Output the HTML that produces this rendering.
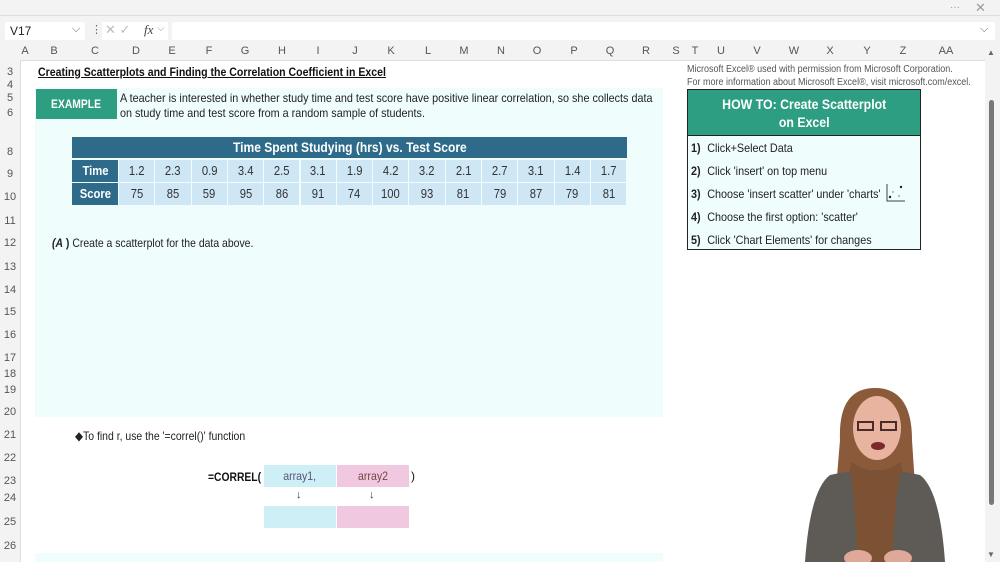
<!DOCTYPE html>
<html><head><meta charset="utf-8"><style>
*{margin:0;padding:0;box-sizing:border-box}
body{width:1000px;height:562px;overflow:hidden;background:#f3f3f3;font-family:"Liberation Sans",Arial,sans-serif;position:relative;color:#222}
.a{position:absolute}
.col{position:absolute;top:45px;font-size:11px;color:#555;transform:translateX(-50%)}
.row{position:absolute;left:0;width:20px;text-align:center;font-size:11px;color:#555;transform:translateY(-50%)}
.n{white-space:nowrap;transform-origin:left top;transform:scaleX(.86)}
.c{position:absolute;height:22px;line-height:22px;text-align:center;font-size:12.5px;color:#333;background:#cfe6f5}
.h{background:#2e6b8a;color:#fff;font-weight:bold}
.c span{display:inline-block;transform:scaleX(.9)}
.step{position:absolute;left:691px;font-size:12px;color:#222;white-space:nowrap;transform-origin:left top;transform:scaleX(.9)}
.step b{margin-right:4px}
</style></head><body>
<div class="a" style="left:0;top:0;width:1000px;height:16px;background:#f3f3f3;border-bottom:1px solid #ddd"></div>
<div class="a" style="left:950px;top:2px;font-size:10px;color:#999">···</div>
<div class="a" style="left:975px;top:0px;font-size:13px;color:#999">✕</div>
<div class="a" style="left:5px;top:22px;width:80px;height:18px;background:#fff;border-radius:2px"></div>
<div class="a" style="left:10px;top:24px;font-size:12px;color:#222">V17</div>
<div class="a" style="left:72px;top:23px;font-size:11px;color:#666">⌵</div>
<div class="a" style="left:91px;top:23px;font-size:11px;color:#666">⋮</div>
<div class="a" style="left:102px;top:22px;width:66px;height:18px;background:#fff"></div>
<div class="a" style="left:105px;top:22px;font-size:13px;color:#bbb">✕ ✓</div>
<div class="a" style="left:144px;top:22px;font-size:13px;color:#444;font-style:italic;font-family:'Liberation Serif',serif">fx</div>
<div class="a" style="left:157px;top:23px;font-size:10px;color:#999">⌵</div>
<div class="a" style="left:172px;top:22px;width:823px;height:18px;background:#fff;border-radius:2px"></div>
<div class="a" style="left:980px;top:23px;font-size:11px;color:#666">⌵</div>
<div class="col" style="left:25px">A</div><div class="col" style="left:54px">B</div><div class="col" style="left:95px">C</div><div class="col" style="left:136px">D</div><div class="col" style="left:172px">E</div><div class="col" style="left:209px">F</div><div class="col" style="left:245px">G</div><div class="col" style="left:282px">H</div><div class="col" style="left:318px">I</div><div class="col" style="left:355px">J</div><div class="col" style="left:391px">K</div><div class="col" style="left:428px">L</div><div class="col" style="left:464px">M</div><div class="col" style="left:501px">N</div><div class="col" style="left:537px">O</div><div class="col" style="left:574px">P</div><div class="col" style="left:610px">Q</div><div class="col" style="left:646px">R</div><div class="col" style="left:676px">S</div><div class="col" style="left:695px">T</div><div class="col" style="left:721px">U</div><div class="col" style="left:757px">V</div><div class="col" style="left:794px">W</div><div class="col" style="left:830px">X</div><div class="col" style="left:867px">Y</div><div class="col" style="left:903px">Z</div><div class="col" style="left:946px">AA</div>
<div class="a" style="left:20px;top:60px;width:965px;height:502px;background:#fff;border-left:1px solid #ddd;border-top:1px solid #ddd"></div>
<div class="a" style="left:987px;top:48px;font-size:8px;color:#666">▲</div>
<div class="a" style="left:989px;top:100px;width:5px;height:405px;background:#777;border-radius:3px"></div>
<div class="a" style="left:987px;top:550px;font-size:8px;color:#666">▼</div>
<div class="row" style="top:72px">3</div><div class="row" style="top:85px">4</div><div class="row" style="top:98px">5</div><div class="row" style="top:113px">6</div><div class="row" style="top:152px">8</div><div class="row" style="top:174px">9</div><div class="row" style="top:197px">10</div><div class="row" style="top:221px">11</div><div class="row" style="top:243px">12</div><div class="row" style="top:267px">13</div><div class="row" style="top:290px">14</div><div class="row" style="top:312px">15</div><div class="row" style="top:335px">16</div><div class="row" style="top:358px">17</div><div class="row" style="top:374px">18</div><div class="row" style="top:390px">19</div><div class="row" style="top:412px">20</div><div class="row" style="top:435px">21</div><div class="row" style="top:458px">22</div><div class="row" style="top:481px">23</div><div class="row" style="top:498px">24</div><div class="row" style="top:522px">25</div><div class="row" style="top:546px">26</div>
<div class="a" style="left:38px;top:65px;font-size:12px;font-weight:bold;text-decoration:underline;color:#111;white-space:nowrap;transform-origin:left top;transform:scaleX(.88)">Creating Scatterplots and Finding the Correlation Coefficient in Excel</div>
<div class="a" style="left:35px;top:88px;width:628px;height:329px;background:#effdfd"></div>
<div class="a" style="left:35px;top:553px;width:628px;height:9px;background:#effdfd"></div>
<div class="a" style="left:36px;top:89px;width:81px;height:30px;background:#2e9e82;color:#fff;font-weight:bold;font-size:12px;line-height:30px;text-align:center"><span style="display:inline-block;transform:scaleX(.86)">EXAMPLE</span></div>
<div class="a" style="left:120px;top:91px;font-size:12px;line-height:15px;color:#222;white-space:nowrap;transform-origin:left top;transform:scaleX(.9)">A teacher is interested in whether study time and test score have positive linear correlation, so she collects data<br>on study time and test score from a random sample of students.</div>
<div class="a h" style="left:72px;top:137px;width:555px;height:21px;line-height:21px;text-align:center;font-size:14px"><span style="display:inline-block;transform:scaleX(.86)">Time Spent Studying (hrs) vs. Test Score</span></div>
<div class="c h" style="left:72px;top:160px;width:46px"><span>Time</span></div>
<div class="c h" style="left:72px;top:183px;width:46px"><span>Score</span></div>
<div id="cells"></div>
<script>
var t=["1.2","2.3","0.9","3.4","2.5","3.1","1.9","4.2","3.2","2.1","2.7","3.1","1.4","1.7"],s=["75","85","59","95","86","91","74","100","93","81","79","87","79","81"],h="";
for(var i=0;i<14;i++){var x=119+i*36.3;h+='<div class="c" style="left:'+x+'px;top:160px;width:35.3px"><span>'+t[i]+'</span></div><div class="c" style="left:'+x+'px;top:183px;width:35.3px"><span>'+s[i]+'</span></div>';}
document.getElementById("cells").innerHTML=h;
</script>
<div class="a" style="left:52px;top:236px;font-size:12px;color:#222;white-space:nowrap;transform-origin:left top;transform:scaleX(.87)"><b><i>(A</i> )</b> Create a scatterplot for the data above.</div>
<div class="a" style="left:75px;top:429px;font-size:12px;color:#222;white-space:nowrap;transform-origin:left top;transform:scaleX(.87)">◆To find r, use the '=correl()' function</div>
<div class="a n" style="left:208px;top:470px;font-size:12px;font-weight:bold;color:#111">=CORREL(</div>
<div class="a" style="left:264px;top:465px;width:72px;height:22px;background:#cdeff5;text-align:center;line-height:22px;font-size:12px;color:#557"><span style="display:inline-block;transform:scaleX(.88)">array1,</span></div>
<div class="a" style="left:337px;top:465px;width:72px;height:22px;background:#f0c8e0;text-align:center;line-height:22px;font-size:12px;color:#744"><span style="display:inline-block;transform:scaleX(.88)">array2</span></div>
<div class="a" style="left:411px;top:469px;font-size:12px;color:#111">)</div>
<div class="a" style="left:296px;top:489px;font-size:11px;color:#335">↓</div>
<div class="a" style="left:369px;top:489px;font-size:11px;color:#335">↓</div>
<div class="a" style="left:264px;top:506px;width:72px;height:22px;background:#cdeff5"></div>
<div class="a" style="left:337px;top:506px;width:72px;height:22px;background:#f0c8e0"></div>
<div class="a" style="left:687px;top:63px;font-size:10px;color:#555;line-height:13px;white-space:nowrap;transform-origin:left top;transform:scaleX(.9)">Microsoft Excel® used with permission from Microsoft Corporation.<br>For more information about Microsoft Excel®, visit microsoft.com/excel.</div>
<div class="a" style="left:687px;top:89px;width:234px;height:161px;border:1px solid #222;background:#effdfd"></div>
<div class="a" style="left:688px;top:90px;width:232px;height:46px;background:#2e9e82;border-bottom:1px solid #222;color:#fff;font-weight:bold;font-size:14px;line-height:18px;text-align:center;padding-top:5px"><span style="display:inline-block;transform:scaleX(.88)">HOW TO: Create Scatterplot<br>on Excel</span></div>
<div class="step" style="top:141px"><b>1)</b> Click+Select Data</div>
<div class="step" style="top:164px"><b>2)</b> Click 'insert' on top menu</div>
<div class="step" style="top:187px"><b>3)</b> Choose 'insert scatter' under 'charts'</div>
<svg class="a" style="left:885px;top:182px" width="22" height="22"><path d="M2 2V19H20" stroke="#444" fill="none" stroke-width="1"/><circle cx="16" cy="5" r="1.2" fill="#222"/><circle cx="5" cy="15" r="1.2" fill="#222"/><circle cx="8" cy="10" r="1" fill="#aaa"/><circle cx="14" cy="14" r="1" fill="#aaa"/></svg>
<div class="step" style="top:210px"><b>4)</b> Choose the first option: 'scatter'</div>
<div class="step" style="top:233px"><b>5)</b> Click 'Chart Elements' for changes</div>
<svg class="a" style="left:790px;top:380px" width="170" height="182">
<path d="M50 60 Q48 8 85 8 Q122 8 122 60 L130 182 L40 182 Z" fill="#8a5a3a"/>
<path d="M40 95 Q85 85 130 95 Q150 110 155 182 L15 182 Q20 110 40 95Z" fill="#5e5a56"/>
<path d="M58 95 Q62 75 68 182 L102 182 Q108 75 114 95 L110 82 Q86 100 62 82Z" fill="#7d5234"/>
<ellipse cx="87" cy="48" rx="24" ry="32" fill="#e8b4a0"/>
<path d="M68 42 h15 v8 h-15z M91 42 h15 v8 h-15z" fill="none" stroke="#4a2a2a" stroke-width="2"/>
<ellipse cx="88" cy="66" rx="7" ry="4" fill="#7a2a2a"/>
<ellipse cx="68" cy="178" rx="14" ry="8" fill="#e0a898"/><ellipse cx="108" cy="178" rx="14" ry="8" fill="#e0a898"/>
</svg>
</body></html>
